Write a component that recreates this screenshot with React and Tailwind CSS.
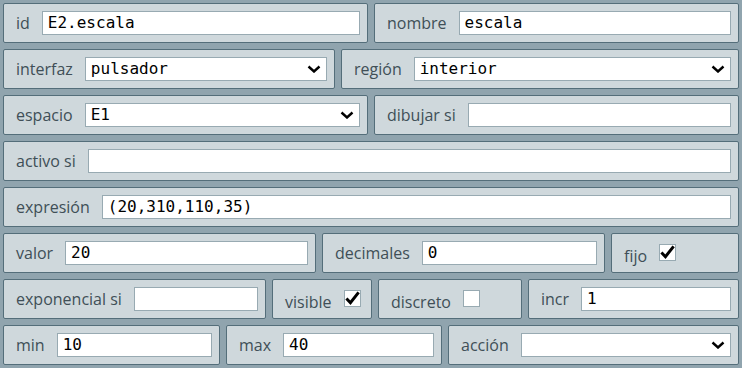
import React from 'react';

const sans = { fontFamily: '"Open Sans", "Noto Sans", sans-serif' };

function Box({ w, children }) {
  return (
    <div
      className={`${w || 'flex-1'} h-[40px] flex items-center pl-[12px] pr-[7px] bg-[#cfd8dc] border border-[#546e7a] rounded-[2px] shrink-0`}
    >
      {children}
    </div>
  );
}

function Label({ children, low }) {
  return (
    <span
      className={`text-[16px] leading-[22px] text-[#404f57] whitespace-nowrap mr-[12px] ${low ? 'mt-[5px]' : ''}`}
      style={sans}
    >
      {children}
    </span>
  );
}

function Field({ label, value = '' }) {
  return (
    <>
      <Label>{label}</Label>
      <div className="flex-1 min-w-0 h-[24px] bg-white border border-[#98aab2] px-[5px] flex items-center text-[16px] text-black font-['DejaVu_Sans_Mono',monospace] whitespace-pre overflow-hidden">
        {value}
      </div>
    </>
  );
}

function Select({ label, value = '' }) {
  return (
    <>
      <Label>{label}</Label>
      <div className="flex-1 min-w-0 h-[24px] bg-white border border-[#98aab2] pl-[5px] pr-[5px] flex items-center justify-between text-[16px] text-black font-['DejaVu_Sans_Mono',monospace]">
        <span>{value}</span>
        <svg width="14" height="8" viewBox="0 0 14 8" className="shrink-0">
          <path d="M1.5 1.5 L7 6.5 L12.5 1.5" fill="none" stroke="#000" strokeWidth="2.4" />
        </svg>
      </div>
    </>
  );
}

function Check({ label, checked }) {
  return (
    <>
      <Label low>{label}</Label>
      <span className="w-[17px] h-[17px] mb-[2px] bg-white border border-[#98aab2] flex items-center justify-center shrink-0">
        {checked && (
          <svg width="16" height="16" viewBox="0 0 16 16">
            <path d="M1.5 8.5 L5.8 13 L14.5 2" fill="none" stroke="#000" strokeWidth="3.2" />
          </svg>
        )}
      </span>
    </>
  );
}

function Row({ children }) {
  return <div className="flex gap-[6px]">{children}</div>;
}

export default function App() {
  return (
    <div className="w-[742px] h-[368px] bg-[#90a4ae] p-[3px] flex flex-col gap-[6px] overflow-hidden">
      <Row>
        <Box w="w-[365px]"><Field label="id" value="E2.escala" /></Box>
        <Box><Field label="nombre" value="escala" /></Box>
      </Row>
      <Row>
        <Box w="w-[332px]"><Select label="interfaz" value="pulsador" /></Box>
        <Box><Select label="región" value="interior" /></Box>
      </Row>
      <Row>
        <Box w="w-[365px]"><Select label="espacio" value="E1" /></Box>
        <Box><Field label="dibujar si" /></Box>
      </Row>
      <Row>
        <Box><Field label="activo si" /></Box>
      </Row>
      <Row>
        <Box><Field label="expresión" value="(20,310,110,35)" /></Box>
      </Row>
      <Row>
        <Box w="w-[313px]"><Field label="valor" value="20" /></Box>
        <Box w="w-[283px]"><Field label="decimales" value="0" /></Box>
        <Box><Check label="fijo" checked /></Box>
      </Row>
      <Row>
        <Box w="w-[263px]"><Field label="exponencial si" /></Box>
        <Box w="w-[100px]"><Check label="visible" checked /></Box>
        <Box w="w-[144px]"><Check label="discreto" /></Box>
        <Box><Field label="incr" value="1" /></Box>
      </Row>
      <Row>
        <Box w="w-[217px]"><Field label="min" value="10" /></Box>
        <Box w="w-[216px]"><Field label="max" value="40" /></Box>
        <Box><Select label="acción" /></Box>
      </Row>
    </div>
  );
}
